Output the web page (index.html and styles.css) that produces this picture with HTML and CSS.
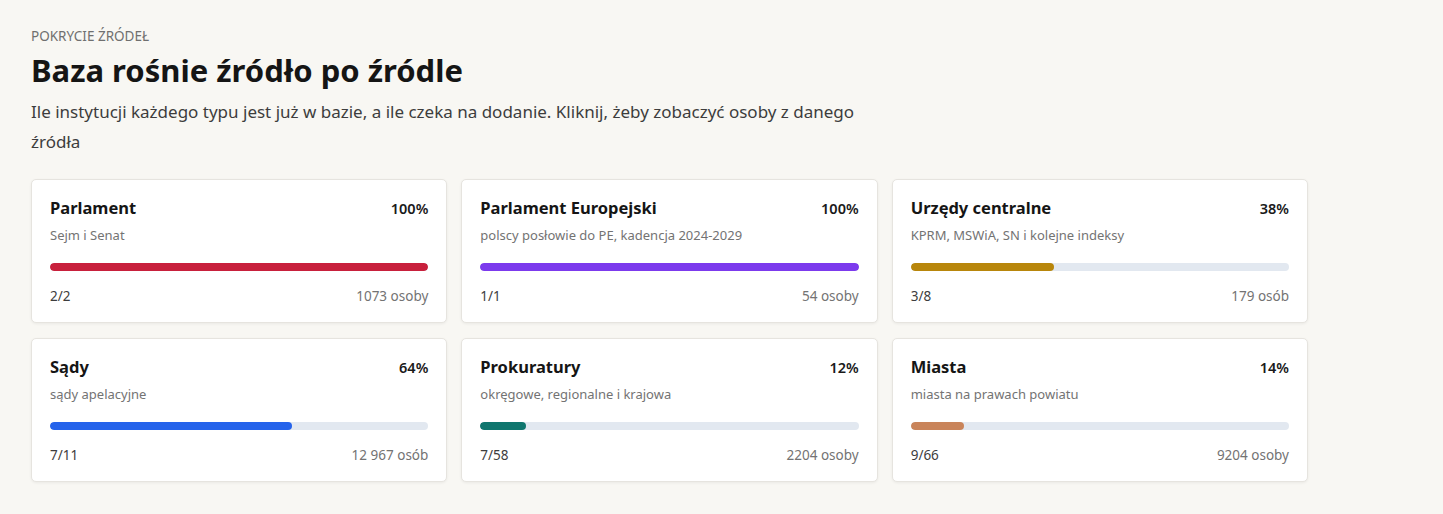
FILE: index.html
```html
<!DOCTYPE html>
<html lang="pl">
<head>
    <meta charset="UTF-8">
    <meta name="viewport" content="width=device-width, initial-scale=1.0">
    <title>Pokrycie źródeł</title>
    <link rel="stylesheet" href="styles.css">
</head>
<body>
    <div class="container">
        <p class="eyebrow">Pokrycie źródeł</p>
        <h1>Baza rośnie źródło po źródle</h1>
        <p class="lead">Ile instytucji każdego typu jest już w bazie, a ile czeka na dodanie. Kliknij, żeby zobaczyć osoby z danego źródła</p>

        <div class="grid">
            <div class="card">
                <div class="card-head">
                    <h3>Parlament</h3>
                    <span class="pct">100%</span>
                </div>
                <p class="desc">Sejm i Senat</p>
                <div class="track"><div class="fill fill-red" style="width: 100%"></div></div>
                <div class="card-foot">
                    <span class="count">2/2</span>
                    <span class="people">1073 osoby</span>
                </div>
            </div>

            <div class="card">
                <div class="card-head">
                    <h3>Parlament Europejski</h3>
                    <span class="pct">100%</span>
                </div>
                <p class="desc">polscy posłowie do PE, kadencja 2024-2029</p>
                <div class="track"><div class="fill fill-purple" style="width: 100%"></div></div>
                <div class="card-foot">
                    <span class="count">1/1</span>
                    <span class="people">54 osoby</span>
                </div>
            </div>

            <div class="card">
                <div class="card-head">
                    <h3>Urzędy centralne</h3>
                    <span class="pct">38%</span>
                </div>
                <p class="desc">KPRM, MSWiA, SN i kolejne indeksy</p>
                <div class="track"><div class="fill fill-gold" style="width: 38%"></div></div>
                <div class="card-foot">
                    <span class="count">3/8</span>
                    <span class="people">179 osób</span>
                </div>
            </div>

            <div class="card">
                <div class="card-head">
                    <h3>Sądy</h3>
                    <span class="pct">64%</span>
                </div>
                <p class="desc">sądy apelacyjne</p>
                <div class="track"><div class="fill fill-blue" style="width: 64%"></div></div>
                <div class="card-foot">
                    <span class="count">7/11</span>
                    <span class="people">12 967 osób</span>
                </div>
            </div>

            <div class="card">
                <div class="card-head">
                    <h3>Prokuratury</h3>
                    <span class="pct">12%</span>
                </div>
                <p class="desc">okręgowe, regionalne i krajowa</p>
                <div class="track"><div class="fill fill-teal" style="width: 12%"></div></div>
                <div class="card-foot">
                    <span class="count">7/58</span>
                    <span class="people">2204 osoby</span>
                </div>
            </div>

            <div class="card">
                <div class="card-head">
                    <h3>Miasta</h3>
                    <span class="pct">14%</span>
                </div>
                <p class="desc">miasta na prawach powiatu</p>
                <div class="track"><div class="fill fill-tan" style="width: 14%"></div></div>
                <div class="card-foot">
                    <span class="count">9/66</span>
                    <span class="people">9204 osoby</span>
                </div>
            </div>
        </div>
    </div>
</body>
</html>
```

FILE: styles.css
```css
body {
    font-family: 'Noto Sans', 'Open Sans', sans-serif;
    background-color: #f8f7f3;
    margin: 0;
    padding: 0;
    color: #1a1a1a;
}

.container {
    max-width: 1277px;
    padding: 26px 31px 30px;
}

.eyebrow {
    margin: 0;
    font-size: 13.5px;
    line-height: 20px;
    text-transform: uppercase;
    color: #6f6f6f;
}

h1 {
    margin: 4px 0 0;
    font-size: 31px;
    line-height: 40px;
    font-weight: 700;
    color: #151515;
}

.lead {
    margin: 7px 0 0;
    max-width: 850px;
    font-size: 17px;
    line-height: 30px;
    color: #3d3d3d;
}

.grid {
    margin-top: 22px;
    display: grid;
    grid-template-columns: repeat(3, 1fr);
    gap: 15px 14px;
}

.card {
    background-color: #fff;
    border: 1px solid #e6e4df;
    border-radius: 5px;
    padding: 18px 18px 16px;
    box-shadow: 0 1px 3px rgba(0, 0, 0, 0.06);
    cursor: pointer;
}

.card-head {
    display: flex;
    justify-content: space-between;
    align-items: center;
}

.card-head h3 {
    margin: 0;
    font-size: 16.5px;
    line-height: 20px;
    font-weight: 700;
    color: #151515;
}

.pct {
    font-size: 14.5px;
    font-weight: 600;
    color: #1a1a1a;
}

.desc {
    margin: 8px 0 0;
    font-size: 13px;
    line-height: 18px;
    color: #737373;
}

.track {
    margin-top: 19px;
    height: 8px;
    border-radius: 4px;
    background-color: #e2e8f0;
    overflow: hidden;
}

.fill {
    height: 100%;
    border-radius: 4px;
}

.fill-red { background-color: #c8203c; }
.fill-purple { background-color: #7c3aed; }
.fill-gold { background-color: #b8860b; }
.fill-blue { background-color: #2563eb; }
.fill-teal { background-color: #0f766e; }
.fill-tan { background-color: #c9845a; }

.card-foot {
    margin-top: 15px;
    display: flex;
    justify-content: space-between;
    font-size: 13.5px;
    line-height: 20px;
}

.count {
    color: #3d3d3d;
}

.people {
    color: #737373;
}
```
